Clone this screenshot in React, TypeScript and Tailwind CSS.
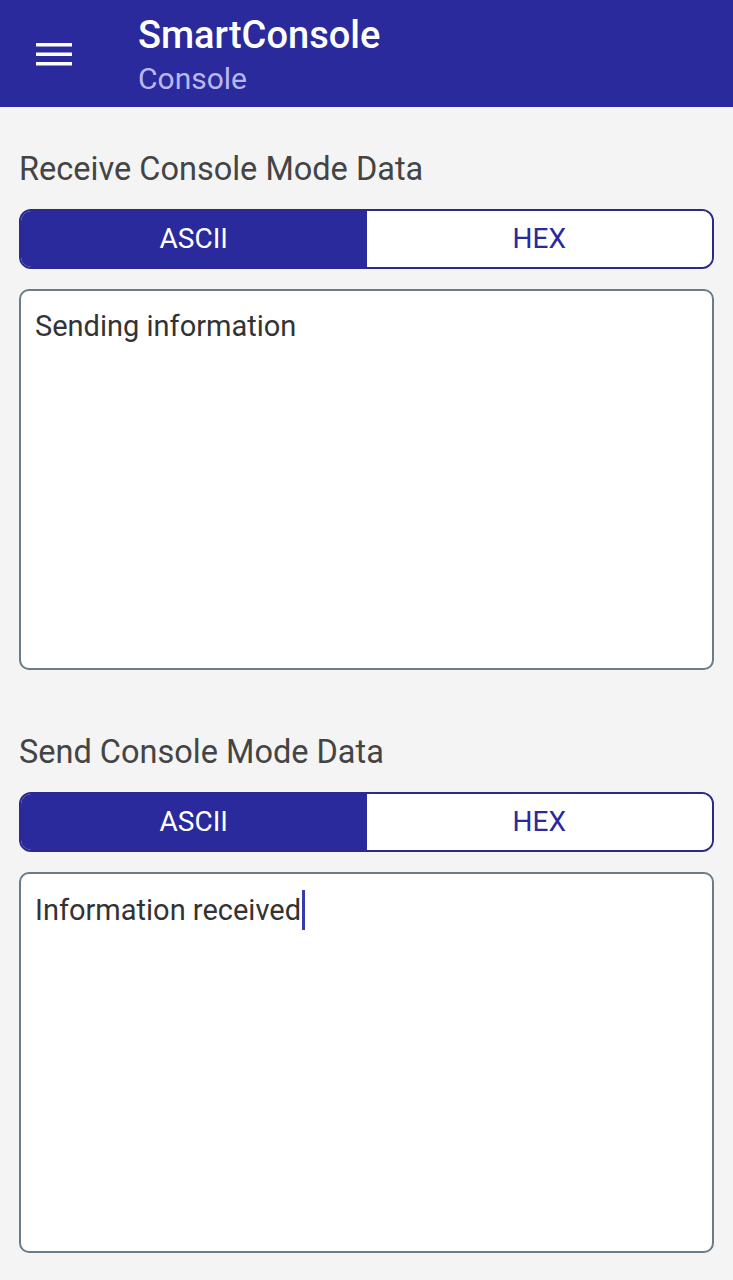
import { useState } from "react";

const font = { fontFamily: "Roboto, 'Noto Sans', sans-serif" };

function ModeToggle() {
  const [mode, setMode] = useState<"ascii" | "hex">("ascii");

  return (
    <div className="flex h-[60px] overflow-hidden rounded-[12px] border-2 border-[#2a2a8c] bg-white">
      <button
        type="button"
        onClick={() => setMode("ascii")}
        className={`flex-1 text-[28px] ${mode === "ascii" ? "bg-[#2a2a9c] text-white" : "bg-white text-[#2a2a9c]"}`}
      >
        ASCII
      </button>
      <button
        type="button"
        onClick={() => setMode("hex")}
        className={`flex-1 text-[28px] ${mode === "hex" ? "bg-[#2a2a9c] text-white" : "bg-white text-[#2a2a9c]"}`}
      >
        HEX
      </button>
    </div>
  );
}

function ConsoleSection({ title, text, caret }: { title: string; text: string; caret?: boolean }) {
  return (
    <section className="flex flex-col">
      <h2 className="mb-[22px] text-[32.5px] leading-[36px] text-[#444]">{title}</h2>
      <ModeToggle />
      <div className="mt-[20px] h-[381px] rounded-[10px] border-2 border-[#697c87] bg-white px-[14px] pt-[16px]">
        <p className="flex items-center text-[29px] leading-[38px] text-[#333]">
          {text}
          {caret && <span className="ml-[1px] inline-block h-[40px] w-[3px] bg-[#3a3ab0]" />}
        </p>
      </div>
    </section>
  );
}

export default function App() {
  return (
    <div className="min-h-[1280px] w-full bg-[#f4f4f4]" style={font}>
      {/* Toolbar */}
      <header className="flex h-[107px] items-center bg-[#2a2a9c] pl-[36px]">
        <svg width="36" height="24" viewBox="0 0 36 24" className="mr-[66px] shrink-0">
          <rect x="0" y="1" width="36" height="3.5" fill="white" />
          <rect x="0" y="10.5" width="36" height="3.5" fill="white" />
          <rect x="0" y="20" width="36" height="3.5" fill="white" />
        </svg>
        <div className="mt-[2px] flex flex-col">
          <span className="text-[38px] font-medium leading-[44px] text-white">SmartConsole</span>
          <span className="mt-[4px] text-[30px] leading-[36px] text-[#b8b8f0]">Console</span>
        </div>
      </header>

      <main className="flex flex-col gap-[64px] px-[19px] pt-[44px]">
        <ConsoleSection title="Receive Console Mode Data" text="Sending information" />
        <ConsoleSection title="Send Console Mode Data" text="Information received" caret />
      </main>
    </div>
  );
}
